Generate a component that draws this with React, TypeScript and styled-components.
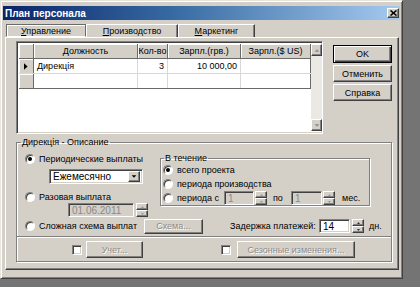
import React from "react";
import styled, { createGlobalStyle, css } from "styled-components";

const face = "#d4d0c8";

const GlobalStyle = createGlobalStyle`
  html, body { margin: 0; padding: 0; background: #747474; }
  body { font-family: "Liberation Sans", Arial, sans-serif; font-size: 9px; color: #000; }
  * { box-sizing: border-box; }
`;

const raised = css`
  border: 1px solid;
  border-color: #fff #404040 #404040 #fff;
  box-shadow: inset -1px -1px #808080, inset 1px 1px ${face};
`;

const sunken = css`
  border: 1px solid;
  border-color: #808080 #fff #fff #808080;
  box-shadow: inset 1px 1px #404040, inset -1px -1px ${face};
`;

const Desktop = styled.div`
  width: 420px;
  height: 287px;
  overflow: hidden;
  background: #747474;
`;

const Window = styled.div`
  width: 403px;
  height: 279px;
  background: ${face};
  border: 1px solid;
  border-color: #e6e4de #404040 #404040 #e6e4de;
  box-shadow: inset 1px 1px #fff, inset -1px -1px #808080;
  padding: 5px 2px 0 2px;
  display: flex;
  flex-direction: column;
`;

const TitleBar = styled.div`
  height: 14px;
  display: flex;
  align-items: center;
  justify-content: space-between;
  padding: 0 1px 0 2px;
  background: linear-gradient(to right, #0a246a, #3a6ea5 45%, #a6caf0);
  color: #fff;
  font-weight: bold;
  font-size: 10px;
`;

const CloseBtn = styled.div`
  ${raised};
  width: 12px;
  height: 10px;
  background: ${face};
  display: flex;
  align-items: center;
  justify-content: center;
`;

const Tabs = styled.div`
  display: flex;
  margin: 4px 0 0 3px;
  height: 13px;
`;

const Tab = styled.div<{ $w: number; $active?: boolean }>`
  width: ${(p) => p.$w}px;
  height: 13px;
  display: flex;
  align-items: center;
  justify-content: center;
  border-top: 1px solid #fff;
  border-left: 1px solid #fff;
  border-right: 1px solid #404040;
  box-shadow: inset -1px 0 #808080;
  ${(p) =>
    p.$active &&
    css`
      border-color: #6a6a6a;
      border-bottom: 1px solid #fff;
      box-shadow: inset 1px 1px #fff;
    `}
`;

const TabPanel = styled.div`
  width: 394px;
  height: 233px;
  margin-left: 2px;
  border: 1px solid;
  border-color: #fff #404040 #404040 #fff;
  box-shadow: inset -1px -1px #808080;
  padding: 3px 6px 0 10px;
  display: flex;
  flex-direction: column;
`;

const TopSection = styled.div`
  display: flex;
  gap: 10px;
`;

const GridBox = styled.div`
  ${sunken};
  width: 307px;
  height: 93px;
  padding: 2px;
  display: flex;
  background: #fff;
`;

const GridData = styled.div`
  width: 292px;
  display: flex;
  flex-direction: column;
`;

const GridRow = styled.div<{ $last?: boolean }>`
  display: grid;
  grid-template-columns: 15px 104px 30px 73px 70px;
  height: 15px;
  border-bottom: 1px solid ${(p) => (p.$last ? "#6a6a6a" : "#d8d8d8")};
`;

const HeadCell = styled.div`
  background: ${face};
  border-right: 1px solid #6a6a6a;
  box-shadow: inset 1px 1px #fff;
  display: flex;
  align-items: center;
  justify-content: center;
  white-space: nowrap;
  overflow: hidden;
`;

const IndCell = styled.div`
  background: ${face};
  border-right: 1px solid #6a6a6a;
  box-shadow: inset 1px 1px #fff;
  display: flex;
  align-items: center;
  justify-content: center;
`;

const Cell = styled.div<{ $right?: boolean; $lastCol?: boolean }>`
  border-right: 1px solid ${(p) => (p.$lastCol ? "#6a6a6a" : "#d8d8d8")};
  display: flex;
  align-items: center;
  padding: 0 3px;
  justify-content: ${(p) => (p.$right ? "flex-end" : "flex-start")};
`;

const ScrollBar = styled.div`
  width: 11px;
  display: flex;
  flex-direction: column;
  background: #ebe9e4;
`;

const ScrollBtn = styled.div`
  ${raised};
  width: 11px;
  height: 12px;
  background: ${face};
  display: flex;
  align-items: center;
  justify-content: center;
`;

const ScrollTrack = styled.div`
  flex: 1;
`;

const ButtonCol = styled.div`
  width: 59px;
  margin-top: 4px;
  display: flex;
  flex-direction: column;
  gap: 2px;
`;

const Button = styled.div<{ $w?: number; $h?: number; $ml?: number; $default?: boolean; $disabled?: boolean }>`
  ${raised};
  width: ${(p) => (p.$w ? `${p.$w}px` : "100%")};
  height: ${(p) => p.$h ?? 17}px;
  margin-left: ${(p) => p.$ml ?? 0}px;
  flex: none;
  background: ${face};
  display: flex;
  align-items: center;
  justify-content: center;
  white-space: nowrap;
  ${(p) =>
    p.$default &&
    css`
      border: 1px solid #000;
      box-shadow: inset 1px 1px #fff, inset -1px -1px #404040, inset -2px -2px #808080;
    `}
  ${(p) =>
    p.$disabled &&
    css`
      color: #8a8a8a;
      text-shadow: 1px 1px #fff;
    `}
`;

const Group = styled.fieldset<{ $w: number; $h?: number }>`
  margin: 0;
  padding: 0;
  width: ${(p) => p.$w}px;
  ${(p) => p.$h && `height: ${p.$h}px;`}
  border: 1px solid #808080;
  box-shadow: inset 1px 1px #fff, 1px 1px #fff;
  min-width: 0;
`;

const Legend = styled.legend<{ $ml: number }>`
  margin-left: ${(p) => p.$ml}px;
  padding: 0 1px;
  line-height: 11px;
  height: 11px;
`;

const MainGroup = styled(Group)`
  margin-top: 3px;
`;

const TopRow = styled.div`
  display: flex;
  padding: 5px 0 0 8px;
`;

const LeftCol = styled.div`
  width: 135px;
  display: flex;
  flex-direction: column;
`;

const OptRow = styled.div<{ $mt?: number; $ml?: number; $h?: number }>`
  display: flex;
  align-items: center;
  height: ${(p) => p.$h ?? 12}px;
  margin-top: ${(p) => p.$mt ?? 0}px;
  margin-left: ${(p) => p.$ml ?? 0}px;
  white-space: nowrap;
`;

const RadioCircle = styled.span<{ $checked?: boolean }>`
  width: 10px;
  height: 10px;
  flex: none;
  border-radius: 50%;
  background: #fff;
  border: 1px solid;
  border-color: #808080 #fff #fff #808080;
  box-shadow: inset 1px 1px #404040;
  margin-right: 4px;
  display: flex;
  align-items: center;
  justify-content: center;
  &::after {
    content: "";
    width: 4px;
    height: 4px;
    border-radius: 50%;
    background: ${(p) => (p.$checked ? "#000" : "transparent")};
  }
`;

const CheckBox = styled.span<{ $ml?: number }>`
  ${sunken};
  width: 10px;
  height: 10px;
  flex: none;
  margin-left: ${(p) => p.$ml ?? 0}px;
  background: #fff;
`;

const Select = styled.div`
  ${sunken};
  width: 94px;
  height: 15px;
  background: #fff;
  display: flex;
  align-items: center;
  justify-content: space-between;
  padding: 2px 2px 2px 3px;
  margin: 4px 0 0 24px;
  font-size: 10px;
`;

const SelectBtn = styled.div`
  ${raised};
  width: 12px;
  height: 11px;
  background: ${face};
  display: flex;
  align-items: center;
  justify-content: center;
`;

const Field = styled.div<{ $w: number; $disabled?: boolean }>`
  ${sunken};
  width: ${(p) => p.$w}px;
  height: 14px;
  flex: none;
  display: flex;
  align-items: center;
  padding: 0 3px;
  background: ${(p) => (p.$disabled ? face : "#fff")};
  color: ${(p) => (p.$disabled ? "#8a8a8a" : "#000")};
  font-size: 10px;
`;

const Spin = styled.div<{ $ml?: number }>`
  width: 12px;
  height: 14px;
  flex: none;
  margin-left: ${(p) => p.$ml ?? 2}px;
  display: flex;
  flex-direction: column;
`;

const SpinHalf = styled.div`
  ${raised};
  flex: 1;
  background: ${face};
  display: flex;
  align-items: center;
  justify-content: center;
`;

const Text = styled.span<{ $w?: number; $ml?: number }>`
  ${(p) => p.$w && `width: ${p.$w}px;`}
  margin-left: ${(p) => p.$ml ?? 0}px;
  flex: none;
  white-space: nowrap;
`;

const SubRows = styled.div`
  padding: 0 0 0 2px;
  display: flex;
  flex-direction: column;
`;

const MidRow = styled.div`
  display: flex;
  align-items: center;
  height: 16px;
  margin-top: 1px;
  padding-left: 8px;
`;

const Separator = styled.div`
  margin-top: 2px;
  border-top: 1px solid #808080;
  border-bottom: 1px solid #fff;
`;

const CheckRow = styled.div`
  display: flex;
  align-items: center;
  height: 23px;
  padding-left: 55px;
`;

const Arrow = ({ dir, color = "#000", size = 5 }: { dir: "up" | "down" | "right"; color?: string; size?: number }) => {
  const pts =
    dir === "up" ? "0,4 3.5,0.5 7,4" : dir === "down" ? "0,0.5 7,0.5 3.5,4" : "0,0 4.5,4 0,8";
  const vb = dir === "right" ? "0 0 5 8" : "0 0 7 4.5";
  const w = dir === "right" ? size : size + 2;
  const h = dir === "right" ? size + 3 : size - 1;
  return (
    <svg width={w} height={h} viewBox={vb}>
      <polygon points={pts} fill={color} />
    </svg>
  );
};

const Spinner = ({ disabled, ml }: { disabled?: boolean; ml?: number }) => {
  const c = disabled ? "#8a8a8a" : "#000";
  return (
    <Spin $ml={ml}>
      <SpinHalf>
        <Arrow dir="up" color={c} size={3} />
      </SpinHalf>
      <SpinHalf>
        <Arrow dir="down" color={c} size={3} />
      </SpinHalf>
    </Spin>
  );
};

const Radio = ({ checked, children, mt, ml }: { checked?: boolean; children: React.ReactNode; mt?: number; ml?: number }) => (
  <OptRow $mt={mt} $ml={ml}>
    <RadioCircle $checked={checked} />
    {children}
  </OptRow>
);

export default function App() {
  return (
    <Desktop>
      <GlobalStyle />
      <Window>
        <TitleBar>
          <span>План персонала</span>
          <CloseBtn>
            <svg width="7" height="6" viewBox="0 0 7 6">
              <path d="M0.5 0.5 L6.5 5.5 M6.5 0.5 L0.5 5.5" stroke="#000" strokeWidth="1.6" />
            </svg>
          </CloseBtn>
        </TitleBar>

        <Tabs>
          <Tab $w={80} $active>
            <span>
              <u>У</u>правление
            </span>
          </Tab>
          <Tab $w={92}>
            <span>
              <u>П</u>роизводство
            </span>
          </Tab>
          <Tab $w={77}>
            <span>
              <u>М</u>аркетинг
            </span>
          </Tab>
        </Tabs>

        <TabPanel>
          <TopSection>
            <GridBox>
              <GridData>
                <GridRow $last>
                  <HeadCell />
                  <HeadCell>Должность</HeadCell>
                  <HeadCell>Кол-во</HeadCell>
                  <HeadCell>Зарпл.(грв.)</HeadCell>
                  <HeadCell>Зарпл.($ US)</HeadCell>
                </GridRow>
                <GridRow>
                  <IndCell>
                    <Arrow dir="right" size={4} />
                  </IndCell>
                  <Cell>Дирекція</Cell>
                  <Cell $right>3</Cell>
                  <Cell $right>10 000,00</Cell>
                  <Cell $lastCol />
                </GridRow>
                <GridRow $last>
                  <IndCell />
                  <Cell />
                  <Cell />
                  <Cell />
                  <Cell $lastCol />
                </GridRow>
              </GridData>
              <ScrollBar>
                <ScrollBtn>
                  <Arrow dir="up" color="#8a8a8a" size={4} />
                </ScrollBtn>
                <ScrollTrack />
                <ScrollBtn>
                  <Arrow dir="down" color="#8a8a8a" size={4} />
                </ScrollBtn>
              </ScrollBar>
            </GridBox>
            <ButtonCol>
              <Button $default $h={18}>OK</Button>
              <Button>Отменить</Button>
              <Button>Справка</Button>
            </ButtonCol>
          </TopSection>

          <MainGroup $w={376}>
            <Legend $ml={4}>Дирекція - Описание</Legend>
            <TopRow>
              <LeftCol>
                <Radio checked>Периодические выплаты</Radio>
                <Select>
                  <span>Ежемесячно</span>
                  <SelectBtn>
                    <Arrow dir="down" size={4} />
                  </SelectBtn>
                </Select>
                <Radio mt={7}>Разовая выплата</Radio>
                <OptRow $ml={43} $h={14}>
                  <Field $w={66} $disabled>01.06.2011</Field>
                  <Spinner disabled ml={2} />
                </OptRow>
              </LeftCol>
              <Group $w={210} $h={53}>
                <Legend $ml={3}>В течение</Legend>
                <SubRows>
                  <Radio checked>всего проекта</Radio>
                  <Radio mt={2}>периода производства</Radio>
                  <OptRow $h={14} $mt={1}>
                    <RadioCircle />
                    <Text $w={47}>периода с</Text>
                    <Field $w={30} $disabled>1</Field>
                    <Spinner disabled ml={1} />
                    <Text $w={18} $ml={6}>по</Text>
                    <Field $w={31} $disabled>1</Field>
                    <Spinner disabled ml={1} />
                    <Text $ml={7}>мес.</Text>
                  </OptRow>
                </SubRows>
              </Group>
            </TopRow>

            <MidRow>
              <OptRow $h={16}>
                <RadioCircle />
                <Text $w={105}>Сложная схема выплат</Text>
              </OptRow>
              <Button $w={59} $h={15} $disabled>
                Схема...
              </Button>
              <Text $w={89} $ml={27}>Задержка платежей:</Text>
              <Field $w={31}>14</Field>
              <Spinner ml={2} />
              <Text $ml={5}>дн.</Text>
            </MidRow>

            <Separator />

            <CheckRow>
              <CheckBox />
              <Button $w={57} $h={17} $ml={4} $disabled>
                Учет...
              </Button>
              <CheckBox $ml={78} />
              <Button $w={118} $h={17} $ml={6} $disabled>
                Сезонные изменения...
              </Button>
            </CheckRow>
          </MainGroup>
        </TabPanel>
      </Window>
    </Desktop>
  );
}
